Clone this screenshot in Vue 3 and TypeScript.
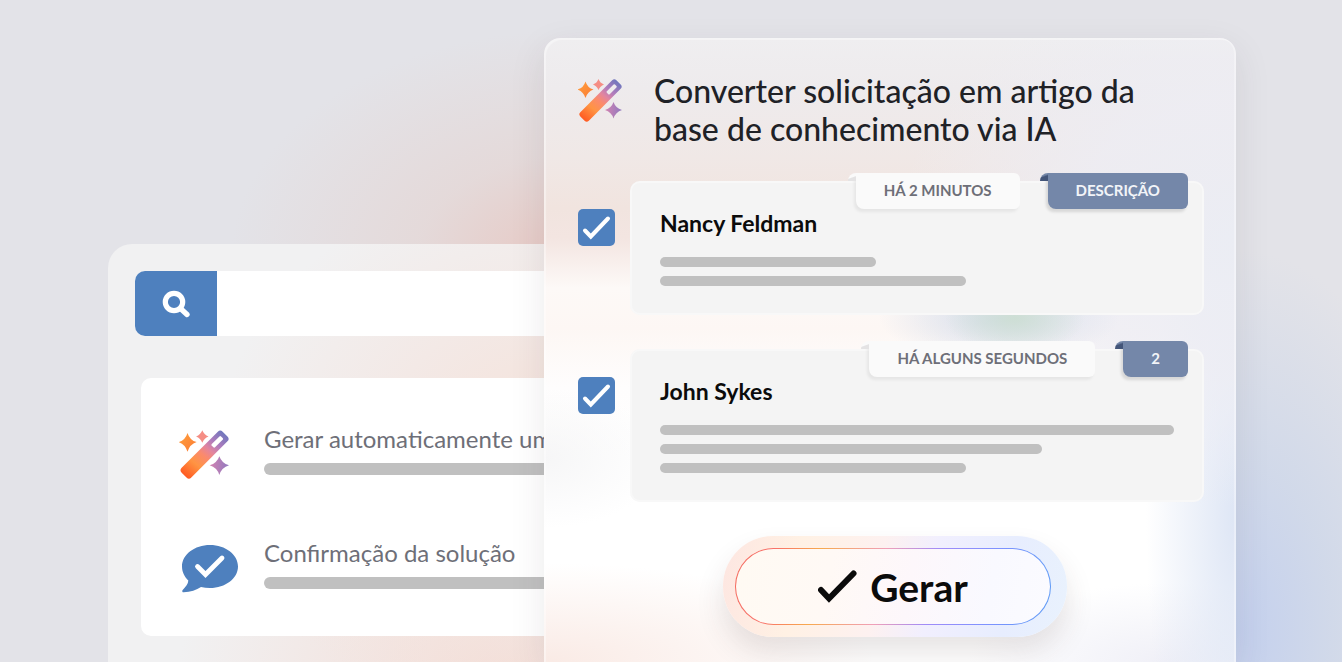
<script setup lang="ts">
import { ref } from 'vue'

interface Entry {
  id: string
  name: string
  time: string
  label: string
  checked: boolean
  lines: number[]
}

const query = ref('')

const entries = ref<Entry[]>([
  { id: 'nancy', name: 'Nancy Feldman', time: 'HÁ 2 MINUTOS', label: 'DESCRIÇÃO', checked: true, lines: [42, 59.5] },
  { id: 'john', name: 'John Sykes', time: 'HÁ ALGUNS SEGUNDOS', label: '2', checked: true, lines: [100, 74.3, 59.5] },
])
</script>

<template>
  <main class="scene">
    <svg class="defs" width="0" height="0" aria-hidden="true">
      <defs>
        <linearGradient id="wand-fill" gradientUnits="userSpaceOnUse" x1="5" y1="33" x2="56" y2="28">
          <stop offset="0" stop-color="#ff5a22" />
          <stop offset="0.28" stop-color="#ff9443" />
          <stop offset="0.48" stop-color="#fb8a6c" />
          <stop offset="0.62" stop-color="#e2859f" />
          <stop offset="0.76" stop-color="#b27cbc" />
          <stop offset="1" stop-color="#6f77bd" />
        </linearGradient>
        <linearGradient id="spark-warm" x1="0" y1="0" x2="1" y2="1">
          <stop offset="0" stop-color="#ffa03c" />
          <stop offset="1" stop-color="#fb7a35" />
        </linearGradient>
        <linearGradient id="spark-cool" x1="0" y1="0" x2="1" y2="0">
          <stop offset="0" stop-color="#d483b0" />
          <stop offset="1" stop-color="#8f79c0" />
        </linearGradient>
        <symbol id="wand" viewBox="8 8 44 44">
          <path
            transform="rotate(-45 30.5 30.5)"
            fill="url(#wand-fill)"
            fill-rule="evenodd"
            d="M8 24.500H53a3 3 0 0 1 3 3V33.500a3 3 0 0 1-3 3H8a3 3 0 0 1-3-3V27.500a3 3 0 0 1 3-3ZM41.500 28.500a1 1 0 0 0-1 1v2a1 1 0 0 0 1 1h9.500a1 1 0 0 0 1-1v-2a1 1 0 0 0-1-1Z"
          />
          <path fill="url(#spark-warm)" d="M15.500 11.500Q17.500 18 23.500 19.500Q17.500 21.500 15.500 28Q13.500 21.500 7.500 19.500Q13.500 18 15.500 11.500Z" />
          <path fill="#f58d84" d="M28.500 9Q30 13 34 14.500Q30 16 28.500 20Q27 16 23 14.500Q27 13 28.500 9Z" />
          <path fill="url(#spark-cool)" d="M43.500 32Q45.500 38 52 40Q45.500 42 43.500 48.500Q41.500 42 35 40Q41.500 38 43.500 32Z" />
        </symbol>
      </defs>
    </svg>

    <section class="back">
      <form class="search" role="search" @submit.prevent>
        <button class="search-button" type="submit" aria-label="Pesquisar">
          <svg width="28" height="28" viewBox="0 0 28 28" aria-hidden="true">
            <circle cx="12" cy="12" r="8.700" fill="none" stroke="#fff" stroke-width="5.200" />
            <path d="M18.500 18.500L25 24.500" stroke="#fff" stroke-width="5.200" stroke-linecap="round" />
          </svg>
        </button>
        <input v-model="query" class="search-input" type="search" aria-label="Pesquisar" />
      </form>

      <ul class="options">
        <li class="option">
          <svg class="option-icon" width="50" height="50" aria-hidden="true"><use href="#wand" /></svg>
          <div class="option-body">
            <span class="option-title">Gerar automaticamente um</span>
            <span class="option-bar"></span>
          </div>
        </li>
        <li class="option">
          <svg class="option-icon" width="60" height="48" viewBox="-3 0 60 48" aria-hidden="true">
            <path
              fill="#4e80be"
              d="M28 0C43.500 0 56 9.600 56 21.500S43.500 43 28 43C24.800 43 21.800 42.600 19 41.900C14.500 44.900 8.500 47 1.700 47.300C0.300 47.300 -0.300 45.900 0.700 44.900C3.800 41.700 6.200 38.600 6.300 35.400C2.400 31.700 0 26.900 0 21.500C0 9.600 12.500 0 28 0Z"
            />
            <path d="M15.500 21.500L23.500 29.500L40 13" fill="none" stroke="#fff" stroke-width="4.800" stroke-linecap="round" />
          </svg>
          <div class="option-body">
            <span class="option-title">Confirmação da solução</span>
            <span class="option-bar"></span>
          </div>
        </li>
      </ul>
    </section>

    <section class="front">
      <header class="heading">
        <svg class="heading-icon" width="44" height="44" aria-hidden="true"><use href="#wand" /></svg>
        <h1>Converter solicitação em artigo da base de conhecimento via IA</h1>
      </header>

      <div class="entries">
        <div v-for="entry in entries" :key="entry.id" class="entry">
          <span class="check">
            <input :id="entry.id" v-model="entry.checked" type="checkbox" />
            <svg v-if="entry.checked" width="37" height="37" viewBox="0 0 37 37" aria-hidden="true">
              <path d="M7 21.500L12.800 27.500L30 9.500" fill="none" stroke="#fff" stroke-width="4" stroke-linecap="round" />
            </svg>
          </span>
          <article class="card">
            <div class="tags">
              <span class="tag tag-time">{{ entry.time }}</span>
              <span class="tag tag-label">{{ entry.label }}</span>
            </div>
            <label class="name" :for="entry.id">{{ entry.name }}</label>
            <div class="lines">
              <span v-for="(width, i) in entry.lines" :key="i" class="line" :style="{ width: width + '%' }"></span>
            </div>
          </article>
        </div>
      </div>

      <div class="action">
        <div class="ring">
          <button class="generate" type="button">
            <svg width="40" height="34" viewBox="0 0 40 34" aria-hidden="true">
              <path d="M3 20L11 28.500L35.500 3.500" fill="none" stroke="#0b0b0b" stroke-width="6" stroke-linecap="round" />
            </svg>
            Gerar
          </button>
        </div>
      </div>
    </section>
  </main>
</template>

<style>
body {
  margin: 0;
}
</style>

<style scoped>
.scene {
  box-sizing: border-box;
  min-height: 100vh;
  overflow: hidden;
  padding: 38px 106px 0 108px;
  display: grid;
  grid-template-columns: 436fr 692fr;
  font-family: Lato, "Liberation Sans", sans-serif;
  background:
    radial-gradient(ellipse 340px 230px at 570px 260px, rgba(232, 192, 184, 0.8), rgba(230, 206, 200, 0.45) 45%, rgba(226, 226, 228, 0) 100%),
    radial-gradient(ellipse 210px 380px at 1240px 630px, rgba(194, 207, 238, 0.95), rgba(200, 212, 234, 0.65) 45%, rgba(224, 225, 230, 0) 100%),
    #e3e3e8;
}

.defs {
  position: absolute;
}

.back {
  grid-area: 1 / 1;
  margin: 206px -60px 0 0;
  padding: 27px 0 0 27px;
  border-radius: 24px 0 0 0;
  background:
    radial-gradient(ellipse 340px 280px at 450px 210px, rgba(246, 224, 214, 0.95), rgba(244, 229, 224, 0.7) 50%, rgba(240, 240, 242, 0) 100%),
    radial-gradient(ellipse 330px 200px at 400px 430px, rgba(244, 218, 210, 0.9), rgba(240, 240, 242, 0) 100%),
    #f1f1f2;
}

.search {
  display: flex;
  height: 65px;
  border-radius: 10px;
  overflow: hidden;
  background: #fff;
}

.search-button {
  flex: none;
  width: 82px;
  border: 0;
  padding: 0;
  display: grid;
  place-items: center;
  background: #4e80be;
}

.search-input {
  flex: 1;
  min-width: 0;
  border: 0;
  padding: 0 20px;
  background: #fff;
  font: inherit;
  font-size: 24px;
}

.options {
  list-style: none;
  margin: 42px 0 0 6px;
  padding: 45px 0 43px 38px;
  display: grid;
  gap: 58px;
  border-radius: 10px;
  background: #fff;
}

.option {
  display: grid;
  grid-template-columns: 60px 1fr;
  gap: 25px;
  height: 56px;
}

.option-icon {
  align-self: end;
  overflow: visible;
}

.option-body {
  display: flex;
  flex-direction: column;
  gap: 8px;
}

.option-title {
  font-size: 24px;
  line-height: 32px;
  color: #6e6f78;
  white-space: nowrap;
}

.option-bar {
  height: 12px;
  border-radius: 6px;
  background: #c0c0c0;
}

.front {
  grid-area: 1 / 2;
  position: relative;
  padding: 34px 32px 26px 34px;
  border-radius: 16px 16px 0 0;
  box-shadow: 0 12px 36px rgba(60, 50, 60, 0.1), inset 2px 2px 1px rgba(255, 255, 255, 0.4), inset -2px 0 1px rgba(255, 255, 255, 0.35);
  background:
    radial-gradient(ellipse 70px 36px at 471px 280px, rgba(204, 222, 210, 0.9), rgba(204, 222, 212, 0) 100%),
    radial-gradient(ellipse 120px 44px at 455px 280px, rgba(210, 219, 234, 0.9), rgba(210, 219, 234, 0) 100%),
    radial-gradient(ellipse 340px 270px at 100% 200px, rgba(235, 237, 244, 1), rgba(237, 237, 244, 0.8) 50%, rgba(239, 238, 244, 0) 100%),
    radial-gradient(ellipse 90px 360px at 100% 480px, rgba(222, 230, 245, 1), rgba(230, 236, 248, 0) 100%),
    radial-gradient(ellipse 330px 100px at 0 100%, rgba(249, 232, 226, 0.9), rgba(255, 255, 255, 0) 100%),
    radial-gradient(ellipse 200px 80px at 90% 100%, rgba(238, 238, 246, 0.9), rgba(255, 255, 255, 0) 100%),
    radial-gradient(ellipse 120px 70px at 0 420px, rgba(244, 244, 245, 0.8), rgba(255, 255, 255, 0) 100%),
    linear-gradient(180deg, #efeef0 0, #eeebed 50px, #f0e8e6 120px, #f1e4df 170px, #f3e5e1 200px, #fdf9f7 250px, #fdf7f4 290px, #fefdfd 350px, #fff 420px);
}

.heading {
  display: grid;
  grid-template-columns: 44px 1fr;
  gap: 32px;
  padding-right: 60px;
}

.heading-icon {
  margin-top: 6px;
}

h1 {
  margin: 0;
  font-size: 32px;
  line-height: 38px;
  font-weight: 500;
  color: #202126;
}

.entries {
  margin-top: 33px;
  display: grid;
  gap: 34px;
}

.entry {
  display: grid;
  grid-template-columns: 37px 1fr;
  gap: 15px;
}

.check {
  display: grid;
  align-self: start;
  margin-top: 28px;
}

.check > * {
  grid-area: 1 / 1;
}

.check input {
  appearance: none;
  margin: 0;
  width: 37px;
  height: 37px;
  border-radius: 5px;
  background: #4e80be;
}

.check svg {
  pointer-events: none;
}

.card {
  position: relative;
  padding: 27px 30px 29px;
  border-radius: 10px;
  background: #f4f4f4;
  box-shadow: inset 0 0 0 2px rgba(255, 255, 255, 0.35);
}

.tags {
  position: absolute;
  top: -8px;
  right: 16px;
  display: flex;
  gap: 28px;
}

.tag {
  position: relative;
  padding: 0 28px 2px;
  font-size: 15px;
  font-weight: 700;
  line-height: 34px;
  border-radius: 0 6px 6px 8px;
  white-space: nowrap;
  box-shadow: -2px 3px 3px rgba(0, 0, 0, 0.12);
}

.tag::before {
  content: "";
  position: absolute;
  top: 0;
  left: -8px;
  width: 8px;
  height: 8px;
  border-radius: 8px 0 0 0;
}

.tag-time {
  background: #fafafa;
  color: #6e6f78;
  box-shadow: -2px 3px 3px rgba(0, 0, 0, 0.06);
}

.tag-time::before {
  background: linear-gradient(160deg, #fafafa 50%, #e4e3e4 60%);
}

.tag-label {
  background: #7487a9;
  color: #f2f4f8;
}

.tag-label::before {
  background: linear-gradient(160deg, #7487a9 35%, #435579 50%);
}

.name {
  display: block;
  font-size: 23px;
  line-height: 30px;
  font-weight: 700;
  color: #0b0b0b;
}

.lines {
  margin-top: 19px;
  display: grid;
  gap: 9px;
}

.line {
  height: 10px;
  border-radius: 5px;
  background: #c0c0c0;
}

.action {
  margin-top: 34px;
  padding-left: 8px;
  display: flex;
  justify-content: center;
}

.ring {
  padding: 12px 16px 12px 12px;
  border-radius: 50px;
  background: linear-gradient(100deg, #fde6e1 0, #fff1e4 22%, #fdf1f0 45%, #f1effe 60%, #e7edfe 82%, #e9f2fd 100%);
  box-shadow: 0 16px 28px rgba(70, 50, 50, 0.13);
}

.generate {
  width: 316px;
  height: 77px;
  padding: 0;
  border: 1px solid transparent;
  border-radius: 39px;
  display: flex;
  align-items: center;
  justify-content: center;
  gap: 12px;
  font-family: inherit;
  font-size: 39px;
  font-weight: 700;
  line-height: 48px;
  color: #0b0b0b;
  background:
    linear-gradient(100deg, #fffaf3 0, #fff9f5 30%, #fdf7fb 55%, #f9f9ff 80%, #fbfbff 100%) padding-box,
    linear-gradient(100deg, #f4695c 0, #f9716a 12%, #f7a94e 26%, #f0a0b8 46%, #a08cf8 62%, #7f92ff 80%, #5c9bf5 100%) border-box;
}
</style>
